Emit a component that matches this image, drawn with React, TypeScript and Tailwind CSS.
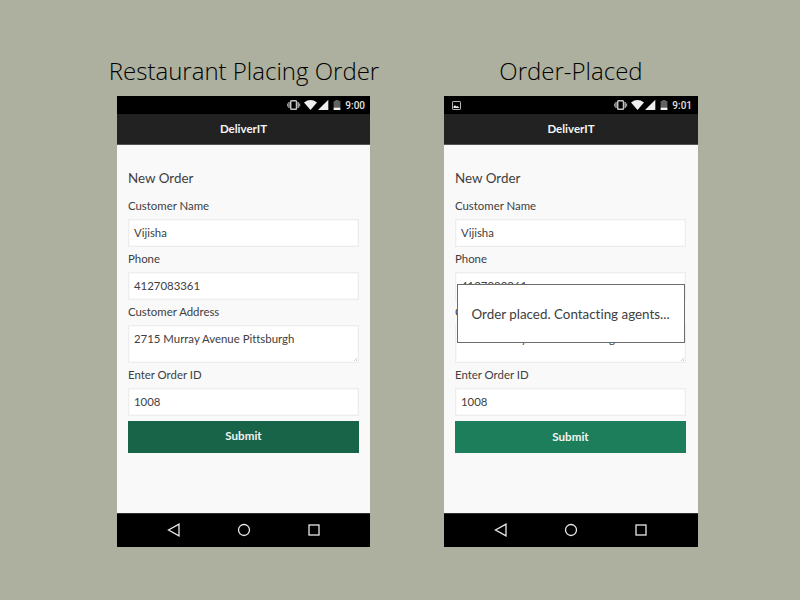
import React from "react";

function StatusBar({ time, screenshot }: { time: string; screenshot?: boolean }) {
  return (
    <div className={screenshot ? "flex h-[18px] items-center bg-black pr-[6px] pl-[8px]" : "flex h-[18px] items-center bg-black pr-[5px] pl-[8px]"}>
      {screenshot && (
        <svg width="9" height="9" viewBox="0 0 9 9">
          <rect x="0.5" y="0.5" width="8" height="8" rx="0.6" fill="none" stroke="#b5b5b5" />
          <path d="M1.5 7V5.500L3 4.300 4.500 5.500 5.700 5 7.500 7Z" fill="#e5e5e5" />
        </svg>
      )}
      <svg className="ml-auto" width="54" height="12" viewBox="0 0 54 12">
        <rect x="3.7" y="1.7" width="5.8" height="8.6" rx="0.8" fill="none" stroke="#c4c4c4" strokeWidth="1.5" />
        <path d="M2 3v6M11.200 3v6" stroke="#a8a8a8" strokeWidth="1.4" />
        <path d="M0.6 4.600v2.800M12.600 4.600v2.800" stroke="#999" strokeWidth="1.2" />
        <path d="M17 3.400Q23.500-1.200 30 3.400L23.500 11Z" fill="#efefef" />
        <path d="M41.300 0.800V11H31Z" fill="#efefef" />
        <path d="M48.400 1h3.200v1.100h1.800V9h-6.800V2.100h1.800Z" fill="#626262" />
        <path d="M46.600 8.700h6.800V11h-6.800Z" fill="#f2f2f2" />
      </svg>
      <span className="ml-[4px] pt-[2px] font-[Roboto] text-[10px] leading-[16px] font-medium text-[#e2e2e2]">{time}</span>
    </div>
  );
}

function Field({ label, value }: { label: string; value: string }) {
  return (
    <div>
      <div className="h-[25px] pt-[4px] text-[11.4px] leading-[16px]">{label}</div>
      <div className="flex h-[28px] items-center border border-[#ededed] bg-white pb-px pl-[5px] text-[11.4px] shadow-[inset_0_0_0_0.5px_#f4f4f4]">{value}</div>
    </div>
  );
}

function NavBar() {
  return (
    <div className="flex h-[34px] items-center justify-center gap-[56px] border-t border-[#303030] bg-black pb-px">
      <svg width="14" height="14" viewBox="0 0 14 14" fill="none" stroke="#e8e8e8" strokeWidth="1.300">
        <path d="M12 1.200V12.800L1.500 7Z" />
      </svg>
      <svg width="14" height="14" viewBox="0 0 14 14" fill="none" stroke="#e8e8e8" strokeWidth="1.300">
        <circle cx="7" cy="7" r="5.500" />
      </svg>
      <svg width="14" height="14" viewBox="0 0 14 14" fill="none" stroke="#e8e8e8" strokeWidth="1.300">
        <rect x="2" y="2" width="10" height="10" />
      </svg>
    </div>
  );
}

function Phone({ time, placed }: { time: string; placed?: boolean }) {
  return (
    <div className="relative flex h-[451px] flex-col bg-[#f9f9f9] text-[#404040] [font-variant-ligatures:none]">
      <StatusBar time={time} screenshot={placed} />
      <div className="flex h-[31px] items-center justify-center border-b border-[#555] bg-[#222] pb-px text-[11.500px] font-bold text-[#f5f5f5]">DeliverIT</div>
      <div className={placed ? "flex-1 pr-[12px] pl-[11px]" : "flex-1 pr-[11px] pl-[11px]"}>
        <h2 className="h-[49px] pt-[23px] text-[13.4px] leading-[20px]">New Order</h2>
        <Field label="Customer Name" value="Vijisha" />
        <Field label="Phone" value="4127083361" />
        <div className="h-[25px] pt-[4px] text-[11.4px] leading-[16px]">Customer Address</div>
        <div className="flex h-[38px] justify-between border border-[#ededed] bg-white pt-[5px] pl-[5px] text-[11.4px] leading-[16px] shadow-[inset_0_0_0_0.5px_#f4f4f4]">
          <span>2715 Murray Avenue Pittsburgh</span>
          <svg className="self-end" width="5" height="5" viewBox="0 0 5 5" stroke="#aaa" strokeWidth="0.600">
            <path d="M1 4 4 1M3 4 4 3" />
          </svg>
        </div>
        <Field label="Enter Order ID" value="1008" />
        <div
          className={
            placed
              ? "mt-[5px] flex h-[32px] items-center justify-center bg-[#1c7e5a] pb-px text-[11.600px] font-bold text-[#f5f5f5]"
              : "mt-[5px] flex h-[32px] items-center justify-center bg-[#176448] pb-[2px] text-[11.600px] font-bold text-[#f5f5f5]"
          }
        >
          Submit
        </div>
      </div>
      <NavBar />
      {placed && (
        <div className="absolute top-[188px] left-[13px] flex h-[59px] w-[228px] items-center justify-center border border-[#6c6c6c] bg-white pt-[2px] pr-px text-[13.400px] whitespace-nowrap">
          Order placed. Contacting agents...
        </div>
      )}
    </div>
  );
}

export default function App() {
  return (
    <main className="flex h-[600px] w-[800px] gap-[74px] overflow-hidden bg-[#adb09e] pt-[52px] pl-[117px] font-[Lato,sans-serif]">
      <section className="w-[253px]">
        <h1 className="-mr-[20px] -ml-[19px] h-[44px] text-center font-['Open_Sans',sans-serif] text-[24px] leading-[38px] font-light whitespace-nowrap text-black">Restaurant Placing Order</h1>
        <Phone time="9:00" />
      </section>
      <section className="w-[254px]">
        <h1 className="h-[44px] text-center font-['Open_Sans',sans-serif] text-[24px] leading-[38px] font-light whitespace-nowrap text-black">Order-Placed</h1>
        <Phone time="9:01" placed />
      </section>
    </main>
  );
}
